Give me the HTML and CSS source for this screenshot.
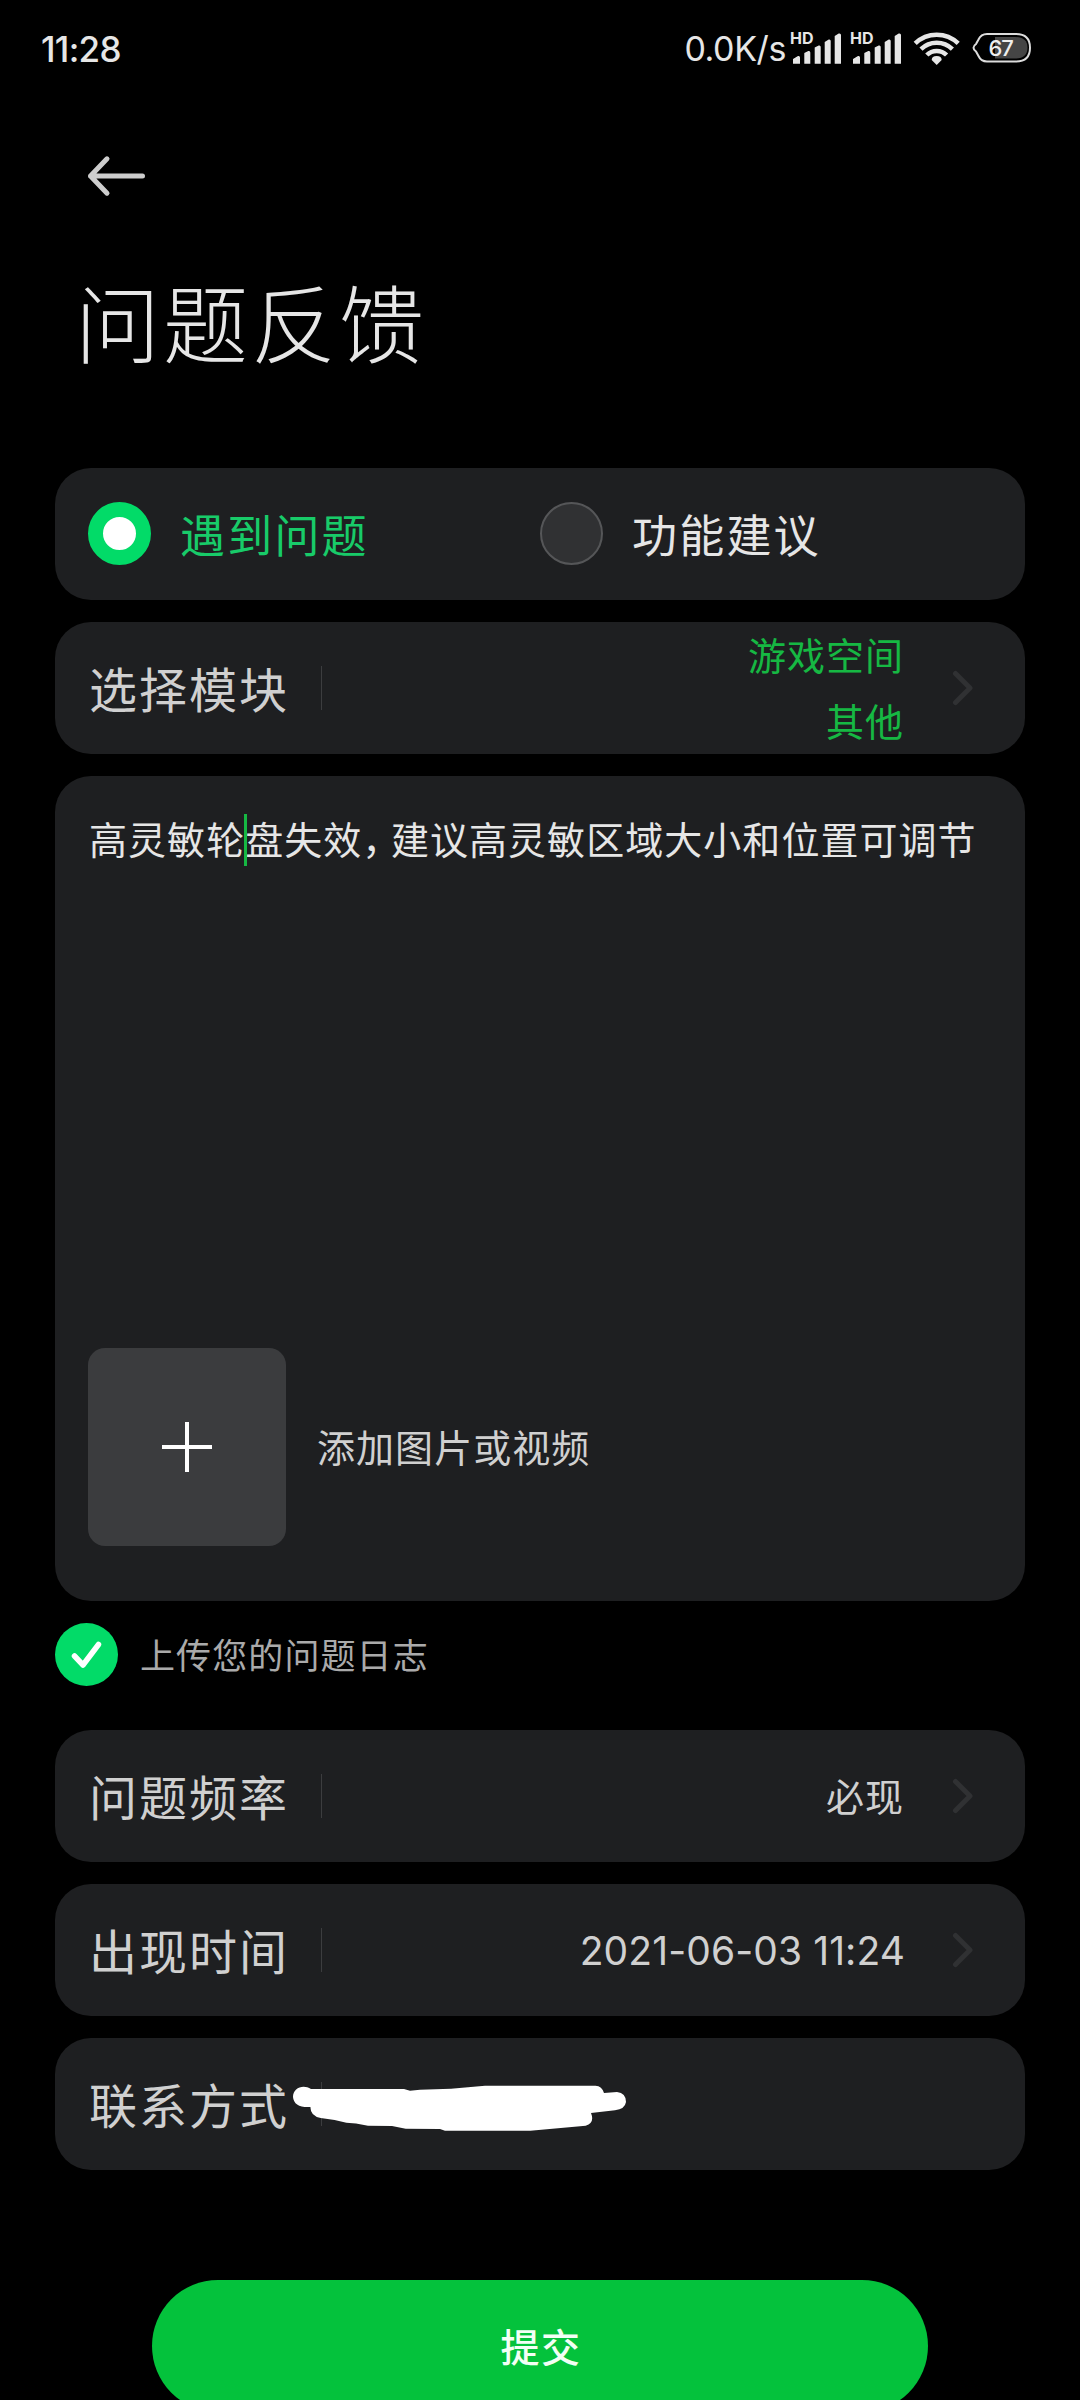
FILE: index.html
```html
<!DOCTYPE html>
<html lang="zh-CN">
<head>
<meta charset="utf-8">
<title>问题反馈</title>
<link rel="stylesheet" href="styles.css">
</head>
<body>
<div class="screen">
  <header class="status">
    <span class="clock">11:28</span>
    <div class="status-right">
      <span class="speed">0.0K/s</span>
      <svg class="status-icons" width="245" height="40" viewBox="0 0 245 40">
        <defs>
          <g id="signal">
            <text x="0" y="13.8" class="hd">HD</text>
            <path d="M3 33.7V29l5-3q2-.5 2 1.500V33.700zM14.300 33.700V23l4-2q2-.5 2 1.500V33.700zM24.700 33.700V17.500l4-2q2-.5 2 1.500V33.700zM34.700 33.700V12l4-2.500q2-.5 2 1.500V33.700zM44.700 33.700V6l4-2.500q2.300-.5 2.300 1.500V33.700z"/>
          </g>
        </defs>
        <g fill="#e6e6e6">
          <use href="#signal"/>
          <use href="#signal" x="60"/>
          <path d="M146.700 35l-5-5q0-4 5-4t5 4z"/>
        </g>
        <g fill="none" stroke="#e6e6e6" stroke-width="4.500">
          <path d="M125.200 13.300a31 31 0 0 1 43 0M131 19.200a22.500 22.500 0 0 1 31.400 0M136.800 25a14 14 0 0 1 19.800 0"/>
        </g>
        <path d="M197 4H226Q240 4 240 17.700T226 31.500H197Q191 31.500 188.500 26L186 21.500Q181 17.700 186 14L188.500 9.500Q191 4 197 4Z" fill="none" stroke="#dcdcdc" stroke-width="2"/>
        <path d="M205 7h20q12.500 0 12.500 10.700T225 28.500H205z" fill="#454545"/>
        <text x="198.500" y="26" class="charge">67</text>
      </svg>
    </div>
  </header>

  <nav class="nav">
    <svg width="58" height="42" viewBox="0 0 58 42" fill="none" stroke="#cdcdcd" stroke-width="5" stroke-linecap="round" stroke-linejoin="round">
      <path d="M55.500 21H3.500M20 3.800 3.500 21 20 38.200"/>
    </svg>
  </nav>
  <h1 class="title">问题反馈</h1>

  <main class="form">
    <section class="card options">
      <label class="option selected"><i class="radio"></i><span>遇到问题</span></label>
      <label class="option"><i class="radio"></i><span>功能建议</span></label>
    </section>

    <section class="card row">
      <span class="label">选择模块</span><i class="divider"></i>
      <span class="value green">游戏空间<br>其他</span>
      <svg class="chevron" width="22" height="36" viewBox="0 0 22 36"><path d="M3.500 3.500 18 18 3.500 32.500"/></svg>
    </section>

    <section class="card details">
      <p class="message">高灵敏轮<i class="caret"></i>盘失效<span class="comma">，</span>建议高灵敏区域大小和位置可调节</p>
      <div class="attach">
        <div class="add">
          <svg width="50" height="50" viewBox="0 0 50 50"><path d="M25 0v50M0 25h50" stroke="#fff" stroke-width="4"/></svg>
        </div>
        <span class="caption">添加图片或视频</span>
      </div>
    </section>

    <label class="log">
      <svg width="63" height="63" viewBox="0 0 63 63"><circle cx="31.500" cy="31.500" r="31.500" fill="#02db68"/><path d="M19.500 33 28 42 43.500 21.500" fill="none" stroke="#fff" stroke-width="5.500" stroke-linecap="round" stroke-linejoin="round"/></svg>
      <span class="caption">上传您的问题日志</span>
    </label>

    <section class="card row">
      <span class="label">问题频率</span><i class="divider"></i>
      <span class="value">必现</span>
      <svg class="chevron" width="22" height="36" viewBox="0 0 22 36"><path d="M3.500 3.500 18 18 3.500 32.500"/></svg>
    </section>
    <section class="card row">
      <span class="label">出现时间</span><i class="divider"></i>
      <span class="value date">2021-06-03 11:24</span>
      <svg class="chevron" width="22" height="36" viewBox="0 0 22 36"><path d="M3.500 3.500 18 18 3.500 32.500"/></svg>
    </section>
    <section class="card row contact">
      <span class="label">联系方式</span><i class="divider"></i>
      <svg class="scribble" width="340" height="56" viewBox="0 0 340 56"><path fill="#fff" d="M3 17C3 8 13 4 21 9H114l6 1.700 10-1L161 8.700 195 5.700H305.500Q312 6 314 13L327 12Q336 13 336 22 335 29 325 30.300L301 33Q305 43 295.700 45.700L240.300 50.700H155L150 49 115.700 48.700 102 46 78 45.700 66 43.500 56.400 42.700 44.600 40 30.700 38Q20 36 20.500 27 4 28 3 17z"/></svg>
    </section>
  </main>

  <button class="submit">提交</button>
</div>
</body>
</html>
```
FILE: styles.css
```css
* { box-sizing: border-box; }
body { margin: 0; background: #000; }
.screen {
  width: 1080px; height: 2400px; overflow: hidden;
  display: flex; flex-direction: column;
  background: #000; color: #d0d0d0;
  font-family: "Noto Sans CJK SC", sans-serif;
}
.screen > * { flex: none; }
svg { display: block; flex: none; }
i { font-style: normal; }

.status {
  height: 100px; padding: 0 45px 0 41px;
  display: flex; justify-content: space-between; align-items: flex-start;
  font-family: Inter, sans-serif; color: #e6e6e6;
}
.clock { margin-top: 28px; font-size: 35px; line-height: 42px; font-weight: 500; letter-spacing: -.7px; }
.status-right { display: flex; margin-top: 28px; }
.speed { font-size: 34px; line-height: 42px; letter-spacing: -.4px; margin-right: 4px; }
.status-icons { overflow: visible; margin-top: 2px; }
.hd { font: 700 16px Inter, sans-serif; }
.charge { font: 500 22px Inter, sans-serif; letter-spacing: -1px; fill: #eee; }

.nav { padding: 55px 0 0 87px; height: 157px; }
.title {
  margin: 0; height: 211px; padding: 3px 0 0 75px;
  font-size: 85px; line-height: 120px; font-weight: 200; letter-spacing: 3px; color: #e6e6e6;
}

.form { display: flex; flex-direction: column; gap: 22px; padding: 0 55px; }
.card { position: relative; background: #1e1f21; border-radius: 36px; }
.options { height: 132px; padding: 0 33px 1px; display: grid; grid-template-columns: 452px 1fr; align-items: center; }
.option { display: flex; align-items: center; gap: 29px; font-size: 45px; line-height: 60px; letter-spacing: 2.200px; color: #e6e6e6; }
.radio { width: 63px; height: 63px; border-radius: 50%; background: #303133; border: 2px solid #555658; }
.selected { color: #18cb69; }
.selected .radio { border: 15.500px solid #02db68; background: #fff; }

.row { height: 132px; padding: 0 51px 0 34px; display: flex; align-items: center; }
.label { width: 232px; font-size: 48px; line-height: 60px; letter-spacing: 2px; margin-top: -3px; }
.divider { width: 1px; height: 44px; background: #3c3d3f; }
.value { flex: 1; text-align: right; font-size: 38px; line-height: 66px; letter-spacing: 1px; margin: -2px 48px 0 0; }
.green { color: #16b843; }
.date { font-family: Inter, sans-serif; font-size: 39px; letter-spacing: .1px; margin: 2px 47px 0 0; }
.chevron { fill: none; stroke: #303133; stroke-width: 5; stroke-linecap: round; stroke-linejoin: round; }

.details { height: 825px; padding: 33px 33px 55px; display: flex; flex-direction: column; justify-content: space-between; }
.message { margin: 0; padding-left: 1px; font-size: 38px; line-height: 58px; letter-spacing: 1.050px; color: #e6e6e6; white-space: nowrap; }
.caret { display: inline-block; width: 3px; height: 52px; margin: 0 -1.500px; vertical-align: middle; position: relative; top: -4px; background: #16b843; }
.comma { letter-spacing: -9.500px; }
.caption { margin-top: -3px; }
.attach { display: flex; align-items: center; gap: 31px; font-size: 38px; letter-spacing: 1.050px; }
.add { width: 198px; height: 198px; border-radius: 17px; background: #3b3c3e; display: grid; place-items: center; }

.log { display: flex; align-items: center; gap: 22px; height: 63px; margin-bottom: 22px; font-size: 35px; letter-spacing: 1.100px; color: #aaa; }
.scribble { position: absolute; left: 235px; top: 42px; }

.submit {
  align-self: center; width: 776px; height: 132px; margin-top: 110px; padding: 0 0 2px 2px;
  border: 0; border-radius: 66px; background: #04c23c; color: #f2fff5;
  font: 500 39px "Noto Sans CJK SC", sans-serif; letter-spacing: 1.500px;
}
```
